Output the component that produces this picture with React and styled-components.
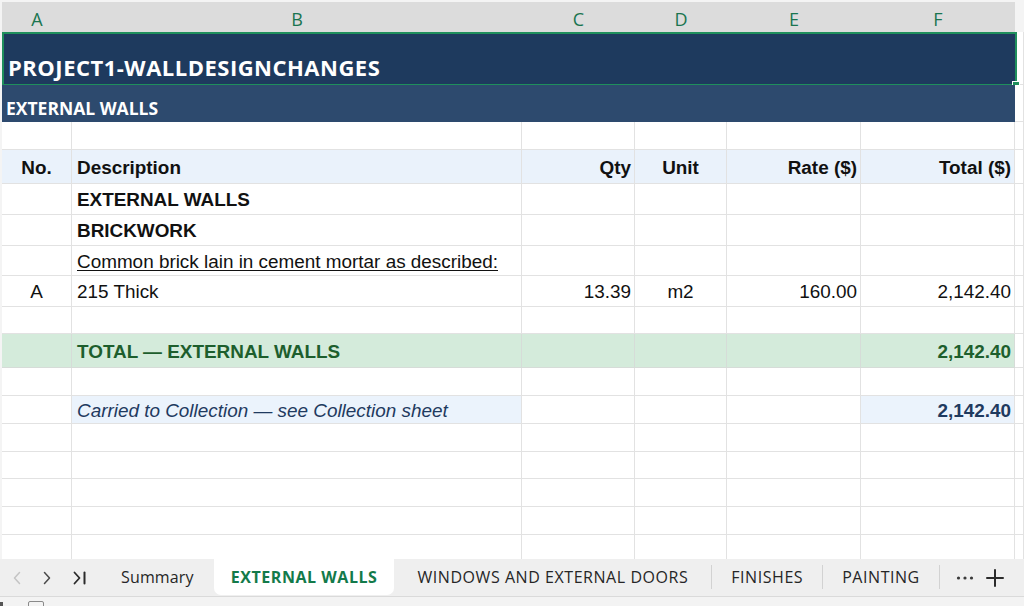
import React from "react";
import styled, { createGlobalStyle } from "styled-components";

const GlobalStyle = createGlobalStyle`
  html, body { margin: 0; padding: 0; }
  body {
    background: #f4f4f4;
    font-family: "Liberation Sans", Arial, sans-serif;
    overflow: hidden;
  }
  #root { height: 606px; }
`;

const COLS = "70px 450px 113px 92px 134px 154px 1fr";

const Window = styled.div`
  height: 606px;
  display: flex;
  flex-direction: column;
  padding-top: 2px;
  box-sizing: border-box;
`;

const Workbook = styled.div`
  flex: 1;
  min-height: 0;
  margin-left: 2px;
  display: flex;
  flex-direction: column;
  overflow: hidden;
  background: #ffffff;
`;

const ColumnHeads = styled.div`
  display: grid;
  grid-template-columns: ${COLS};
  height: 30px;
  flex: none;
`;

const ColumnHead = styled.div`
  background: ${(p) => (p.$blank ? "#f4f4f4" : "#dcdcdc")};
  color: #1a7550;
  font-family: "Open Sans", "Noto Sans", sans-serif;
  font-size: 18px;
  display: flex;
  align-items: center;
  justify-content: center;
  padding-top: 3px;
`;

const Row = styled.div`
  display: grid;
  grid-template-columns: ${COLS};
  height: ${(p) => p.$h}px;
  flex: none;
  position: relative;
`;

const Cell = styled.div`
  box-sizing: border-box;
  border-right: 1px solid ${(p) => p.$line || "#e2e2e2"};
  border-bottom: 1px solid ${(p) => p.$line || "#e2e2e2"};
  background: ${(p) => p.$bg || "#ffffff"};
  display: flex;
  align-items: center;
  justify-content: ${(p) =>
    p.$align === "right" ? "flex-end" : p.$align === "center" ? "center" : "flex-start"};
  padding: 2px ${(p) => (p.$align === "right" ? "3px" : "0")} 0
    ${(p) => (p.$align === "left" ? "5px" : "0")};
  font-size: 18.9px;
  font-weight: ${(p) => (p.$bold ? 700 : 400)};
  font-style: ${(p) => (p.$italic ? "italic" : "normal")};
  color: ${(p) => p.$color || "#111111"};
  white-space: nowrap;
  overflow: hidden;
`;

const Underlined = styled.span`
  text-decoration: underline;
  text-underline-offset: 2px;
  text-decoration-thickness: 1px;
`;

const Banner = styled.div`
  grid-column: 1 / 7;
  background: ${(p) => p.$bg};
  color: #ffffff;
  font-family: "Open Sans", "Noto Sans", sans-serif;
  font-weight: 700;
  font-size: ${(p) => p.$size}px;
  letter-spacing: ${(p) => p.$spacing || 0}px;
  display: flex;
  align-items: flex-end;
  padding: 0 0 ${(p) => p.$bottom}px ${(p) => p.$left}px;
  white-space: nowrap;
  position: relative;
`;

const Selection = styled.div`
  position: absolute;
  left: 0;
  top: 0;
  right: -2px;
  bottom: -1px;
  border: 2px solid #1f8f5c;
  pointer-events: none;
`;

const FillHandle = styled.div`
  position: absolute;
  right: -5px;
  bottom: -5px;
  width: 6px;
  height: 6px;
  background: #1f8f5c;
  border: 1px solid #ffffff;
`;

const TabBar = styled.div`
  height: 37px;
  flex: none;
  background: #efefef;
  display: flex;
  align-items: stretch;
  font-family: "Open Sans", "Noto Sans", sans-serif;
  font-size: 16px;
  color: #262626;
`;

const NavGroup = styled.div`
  width: 101px;
  flex: none;
  display: flex;
  align-items: center;
  padding-left: 13px;
  box-sizing: border-box;
  gap: 22px;
`;

const Tab = styled.div`
  display: flex;
  align-items: center;
  padding: 0 ${(p) => p.$pad}px;
  white-space: nowrap;
  letter-spacing: ${(p) => (p.$caps ? 0.55 : 0.15)}px;
  background: ${(p) => (p.$active ? "#ffffff" : "transparent")};
  color: ${(p) => (p.$active ? "#137a4a" : "#262626")};
  font-weight: ${(p) => (p.$active ? 700 : 400)};
  border-radius: 0 0 7px 7px;
  margin-bottom: 1px;
`;

const Divider = styled.div`
  width: 1px;
  background: #d2d2d2;
  margin: 6px 0 7px;
  flex: none;
`;

const Tools = styled.div`
  display: flex;
  align-items: center;
  gap: 12px;
  padding-left: 16px;
`;

const StatusStrip = styled.div`
  height: 10px;
  flex: none;
  background: #f3f3f3;
  border-top: 1px solid #dadada;
  box-sizing: border-box;
  position: relative;
  overflow: hidden;
`;

const StatusBox = styled.div`
  position: absolute;
  left: 28px;
  top: 4px;
  width: 16px;
  height: 14px;
  border: 1px solid #8a8a8a;
  border-radius: 2px;
  box-sizing: border-box;
`;

const StatusMark = styled.div`
  position: absolute;
  left: 0;
  top: 5px;
  width: 3px;
  height: 6px;
  background: #555;
`;

const Chevron = ({ dir, color }) => (
  <svg width="8" height="14" viewBox="0 0 8 14">
    <path
      d={dir === "left" ? "M6.5 1.5 L1.5 7 L6.5 12.5" : "M1.5 1.5 L6.5 7 L1.5 12.5"}
      fill="none"
      stroke={color}
      strokeWidth="1.5"
      strokeLinecap="round"
      strokeLinejoin="round"
    />
  </svg>
);

const LastSheet = () => (
  <svg width="14" height="14" viewBox="0 0 14 14">
    <path d="M1.5 1.5 L6.5 7 L1.5 12.5" fill="none" stroke="#2b2b2b" strokeWidth="1.8" strokeLinecap="round" strokeLinejoin="round" />
    <path d="M11.5 1.5 V12.5" stroke="#2b2b2b" strokeWidth="2" strokeLinecap="round" />
  </svg>
);

const MoreDots = () => (
  <svg width="18" height="6" viewBox="0 0 18 6">
    <circle cx="2.5" cy="3" r="1.6" fill="#3a3a3a" />
    <circle cx="9" cy="3" r="1.6" fill="#3a3a3a" />
    <circle cx="15.5" cy="3" r="1.6" fill="#3a3a3a" />
  </svg>
);

const Plus = () => (
  <svg width="18" height="18" viewBox="0 0 18 18">
    <path d="M9 1 V17 M1 9 H17" stroke="#2b2b2b" strokeWidth="2" strokeLinecap="round" />
  </svg>
);

const LETTERS = ["A", "B", "C", "D", "E", "F"];

const HEAD_BG = "#eaf2fb";
const TOTAL_BG = "#d4ebdb";
const TOTAL_FG = "#1d5e2d";
const NAVY = "#1f3a5f";
const CARRY_BG = "#ebf3fc";

// One grid row of six cells plus the partly visible column G.
const SheetRow = ({ h, cells = [], bg, line }) => (
  <Row $h={h}>
    {Array.from({ length: 6 }).map((_, i) => {
      const c = cells[i] || {};
      return (
        <Cell
          key={i}
          $align={c.align || (i === 1 ? "left" : "right")}
          $bold={c.bold}
          $italic={c.italic}
          $color={c.color}
          $bg={c.bg || bg}
          $line={line}
        >
          {c.text}
        </Cell>
      );
    })}
    <Cell />
  </Row>
);

const blankRows = [28, 27, 28, 28, 28, 28];

const tabs = [
  { name: "Summary", pad: 20 },
  { name: "EXTERNAL WALLS", pad: 17, active: true, caps: true },
  { name: "WINDOWS AND EXTERNAL DOORS", pad: 23, caps: true },
  { name: "FINISHES", pad: 19, caps: true, divider: true },
  { name: "PAINTING", pad: 19, caps: true, divider: true },
];

export default function App() {
  return (
    <>
      <GlobalStyle />
      <Window>
        <Workbook>
          <ColumnHeads>
            {LETTERS.map((l) => (
              <ColumnHead key={l}>{l}</ColumnHead>
            ))}
            <ColumnHead $blank />
          </ColumnHeads>

          <Row $h={53}>
            <Banner $bg="#1e3a5e" $size={22} $spacing={0.5} $left={6} $bottom={3}>
              PROJECT1-WALLDESIGNCHANGES
              <Selection>
                <FillHandle />
              </Selection>
            </Banner>
            <Cell />
          </Row>
          <Row $h={37}>
            <Banner $bg="#2d4a6e" $size={17.5} $left={4} $bottom={2}>
              EXTERNAL WALLS
            </Banner>
            <Cell />
          </Row>

          <SheetRow h={28} />
          <SheetRow
            h={34}
            bg={HEAD_BG}
            cells={[
              { text: "No.", bold: true, align: "center" },
              { text: "Description", bold: true },
              { text: "Qty", bold: true },
              { text: "Unit", bold: true, align: "center" },
              { text: "Rate ($)", bold: true },
              { text: "Total ($)", bold: true },
            ]}
          />
          <SheetRow h={31} cells={[{}, { text: "EXTERNAL WALLS", bold: true }]} />
          <SheetRow h={31} cells={[{}, { text: "BRICKWORK", bold: true }]} />
          <SheetRow
            h={30}
            cells={[{}, { text: <Underlined>Common brick lain in cement mortar as described:</Underlined> }]}
          />
          <SheetRow
            h={31}
            cells={[
              { text: "A", align: "center" },
              { text: "215 Thick" },
              { text: "13.39" },
              { text: "m2", align: "center" },
              { text: "160.00" },
              { text: "2,142.40" },
            ]}
          />
          <SheetRow h={27} />
          <SheetRow
            h={34}
            bg={TOTAL_BG}
            line="#d6dcd8"
            cells={[
              {},
              { text: "TOTAL — EXTERNAL WALLS", bold: true, color: TOTAL_FG },
              {},
              {},
              {},
              { text: "2,142.40", bold: true, color: TOTAL_FG },
            ]}
          />
          <SheetRow h={28} />
          <SheetRow
            h={28}
            cells={[
              {},
              { text: "Carried to Collection — see Collection sheet", italic: true, color: NAVY, bg: CARRY_BG },
              {},
              {},
              {},
              { text: "2,142.40", bold: true, color: NAVY, bg: CARRY_BG },
            ]}
          />
          {blankRows.map((h, i) => (
            <SheetRow key={i} h={h} />
          ))}
        </Workbook>

        <TabBar>
          <NavGroup>
            <Chevron dir="left" color="#c4c4c4" />
            <Chevron dir="right" color="#4a4a4a" />
            <LastSheet />
          </NavGroup>
          {tabs.map((t) => (
            <React.Fragment key={t.name}>
              {t.divider && <Divider />}
              <Tab $pad={t.pad} $active={t.active} $caps={t.caps}>
                {t.name}
              </Tab>
            </React.Fragment>
          ))}
          <Divider />
          <Tools>
            <MoreDots />
            <Plus />
          </Tools>
        </TabBar>
        <StatusStrip>
          <StatusMark />
          <StatusBox />
        </StatusStrip>
      </Window>
    </>
  );
}
